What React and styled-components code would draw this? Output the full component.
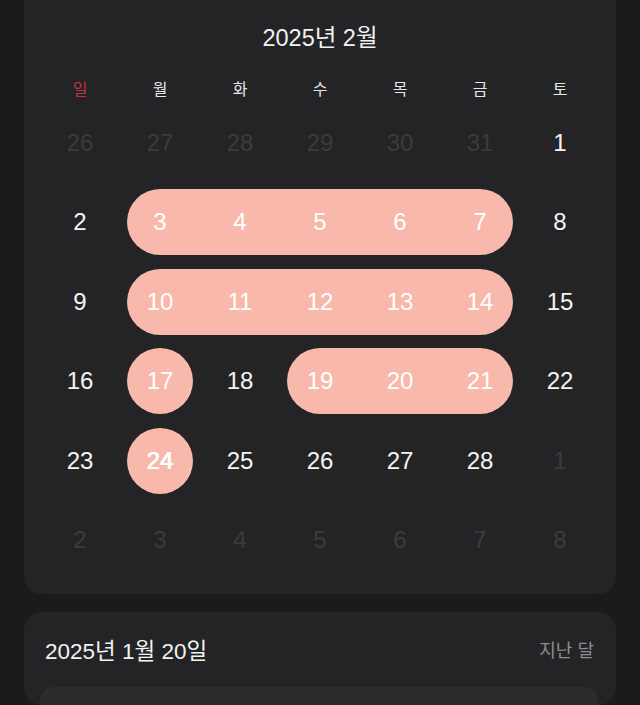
import React from "react";
import styled, { createGlobalStyle } from "styled-components";

const Global = createGlobalStyle`
  html, body { margin: 0; padding: 0; background: #1b1b1d; }
  body { font-family: "Liberation Sans", "Noto Sans CJK KR", sans-serif; -webkit-font-smoothing: antialiased; }
`;

const Page = styled.div`
  width: 640px;
  height: 705px;
  overflow: hidden;
  padding: 0 24px;
  box-sizing: border-box;
  display: flex;
  flex-direction: column;
  gap: 18px;
`;

const Card = styled.section`
  background: #242426;
  border-radius: 0 0 18px 18px;
  padding: 23px 16px 14px;
  display: flex;
  flex-direction: column;
`;

const MonthTitle = styled.h1`
  margin: 0;
  font-size: 23.5px;
  font-weight: 400;
  line-height: 30px;
  color: #f2f2f2;
  text-align: center;
`;

const WeekHeader = styled.div`
  margin-top: 24px;
  display: grid;
  grid-template-columns: repeat(7, 1fr);
  height: 26px;
  align-items: center;
`;

const WeekdayLabel = styled.span`
  text-align: center;
  font-size: 16px;
  line-height: 26px;
  color: ${(p) => (p.$sunday ? "#c2333f" : "#e6e6e6")};
`;

const Week = styled.div`
  display: grid;
  grid-template-columns: repeat(7, 1fr);
  height: 79.5px;
  align-items: center;
`;

const Range = styled.div`
  grid-row: 1;
  grid-column: ${(p) => p.$start} / span ${(p) => p.$span};
  margin: 0 7px;
  height: 66px;
  border-radius: 33px;
  background: #f8b8ab;
`;

const Day = styled.span`
  grid-row: 1;
  grid-column: ${(p) => p.$col};
  text-align: center;
  font-size: 24px;
  line-height: 30px;
  color: ${(p) =>
    p.$dim ? "#3b3b3d" : p.$onRange ? "#ffffff" : "#f4f4f4"};
  text-shadow: ${(p) => (p.$bold ? "0.4px 0 0 #ffffff, -0.4px 0 0 #ffffff" : "none")};
  position: relative;
`;

const DetailCard = styled.section`
  background: #242426;
  border-radius: 18px;
  padding: 22px 18px 0 16px;
  display: flex;
  flex-direction: column;
  gap: 23px;
  flex: 1;
`;

const DetailHeader = styled.div`
  display: flex;
  justify-content: space-between;
  align-items: center;
  height: 30px;
  padding: 0 4px 0 5px;
`;

const DetailDate = styled.span`
  font-size: 22.5px;
  color: #f2f2f2;
`;

const LastMonth = styled.span`
  font-size: 18px;
  color: #8d8d91;
`;

const InnerBox = styled.div`
  background: #2c2c2e;
  border-radius: 14px 14px 0 0;
  flex: 1;
`;

const weekdays = ["일", "월", "화", "수", "목", "금", "토"];

const weeks = [
  { days: [26, 27, 28, 29, 30, 31, 1], dim: [0, 1, 2, 3, 4, 5], ranges: [] },
  { days: [2, 3, 4, 5, 6, 7, 8], dim: [], ranges: [[2, 5]] },
  { days: [9, 10, 11, 12, 13, 14, 15], dim: [], ranges: [[2, 5]] },
  { days: [16, 17, 18, 19, 20, 21, 22], dim: [], ranges: [[2, 1], [4, 3]] },
  { days: [23, 24, 25, 26, 27, 28, 1], dim: [6], ranges: [[2, 1]], bold: 1 },
  { days: [2, 3, 4, 5, 6, 7, 8], dim: [0, 1, 2, 3, 4, 5, 6], ranges: [] },
];

function inRange(ranges, col) {
  return ranges.some(([s, n]) => col >= s && col < s + n);
}

export default function App() {
  return (
    <>
      <Global />
      <Page>
        <Card>
          <MonthTitle>2025년 2월</MonthTitle>
          <WeekHeader>
            {weekdays.map((w, i) => (
              <WeekdayLabel key={w} $sunday={i === 0}>
                {w}
              </WeekdayLabel>
            ))}
          </WeekHeader>
          {weeks.map((wk, wi) => (
            <Week key={wi}>
              {wk.ranges.map(([s, n], ri) => (
                <Range key={ri} $start={s} $span={n} />
              ))}
              {wk.days.map((d, i) => (
                <Day
                  key={i}
                  $col={i + 1}
                  $dim={wk.dim.includes(i)}
                  $onRange={inRange(wk.ranges, i + 1)}
                  $bold={wk.bold === i}
                >
                  {d}
                </Day>
              ))}
            </Week>
          ))}
        </Card>
        <DetailCard>
          <DetailHeader>
            <DetailDate>2025년 1월 20일</DetailDate>
            <LastMonth>지난 달</LastMonth>
          </DetailHeader>
          <InnerBox />
        </DetailCard>
      </Page>
    </>
  );
}
